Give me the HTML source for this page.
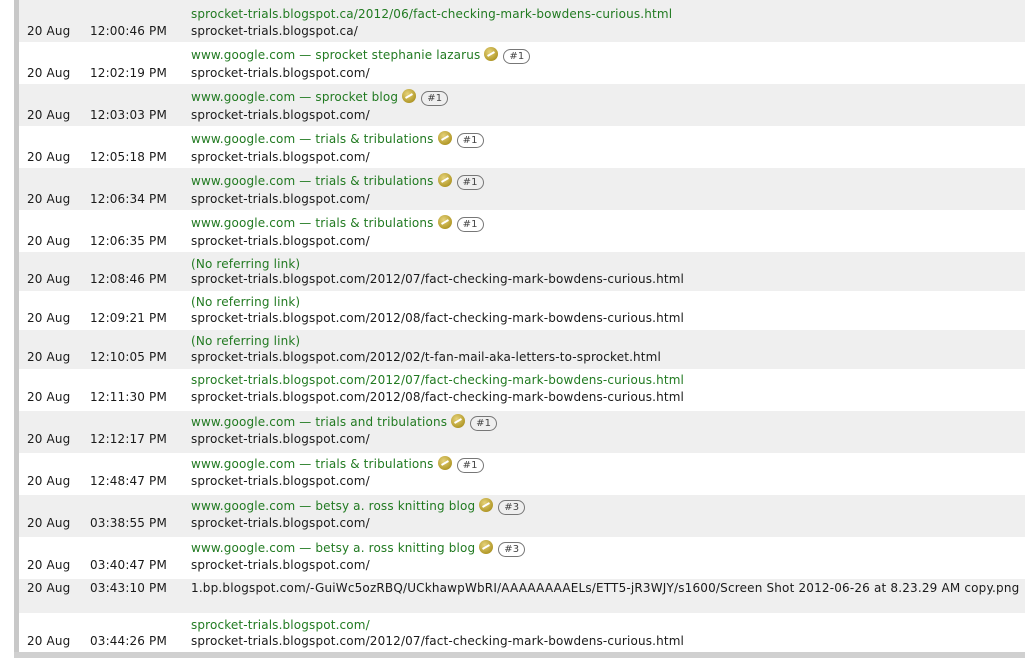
<!DOCTYPE html>
<html><head><meta charset="utf-8"><style>
body{margin:0;width:1025px;height:658px;overflow:hidden;background:#fff;font-family:"DejaVu Sans","Liberation Sans",sans-serif;font-size:12px;letter-spacing:0.15px;color:#1a1a1a;position:relative}
.strip{position:absolute;left:14px;top:0;width:5px;height:658px;background:#c8c8c8}
.bot{position:absolute;left:14px;top:652px;width:1011px;height:6px;background:#d0d0d0}
.row{position:absolute;left:19px;right:0}
.g{background:#efefef}.w{background:#fff}
.t{position:absolute;line-height:14px;white-space:nowrap}
.gr{color:#217a21}
.ic{display:inline-block;width:14px;height:14px;border-radius:50%;background:radial-gradient(circle at 40% 35%,#e6d27a,#b39a2a 70%,#8a7418);vertical-align:-2px;margin-left:4px;position:relative}
.ic:after{content:"";position:absolute;left:3px;top:6px;width:8px;height:2px;background:#fff;transform:rotate(-30deg)}
.pill{display:inline-block;border:1px solid #777;border-radius:8px;font-size:10px;color:#444;padding:0 5px;line-height:13px;margin-left:5px;vertical-align:0px}
</style></head><body>
<div class="strip"></div>
<div class="row g" style="top:0;height:42px"><span class="t" style="left:8px;top:24px">20 Aug</span><span class="t" style="left:71px;top:24px">12:00:46 PM</span><span class="t gr" style="left:172px;top:7px">sprocket-trials.blogspot.ca/2012/06/fact-checking-mark-bowdens-curious.html</span><span class="t" style="left:172px;top:24px">sprocket-trials.blogspot.ca/</span></div>
<div class="row w" style="top:42px;height:42px"><span class="t" style="left:8px;top:24px">20 Aug</span><span class="t" style="left:71px;top:24px">12:02:19 PM</span><span class="t gr" style="left:172px;top:5px">www.google.com — sprocket stephanie lazarus<span class="ic"></span><span class="pill">#1</span></span><span class="t" style="left:172px;top:24px">sprocket-trials.blogspot.com/</span></div>
<div class="row g" style="top:84px;height:42px"><span class="t" style="left:8px;top:24px">20 Aug</span><span class="t" style="left:71px;top:24px">12:03:03 PM</span><span class="t gr" style="left:172px;top:5px">www.google.com — sprocket blog<span class="ic"></span><span class="pill">#1</span></span><span class="t" style="left:172px;top:24px">sprocket-trials.blogspot.com/</span></div>
<div class="row w" style="top:126px;height:42px"><span class="t" style="left:8px;top:24px">20 Aug</span><span class="t" style="left:71px;top:24px">12:05:18 PM</span><span class="t gr" style="left:172px;top:5px">www.google.com — trials &amp; tribulations<span class="ic"></span><span class="pill">#1</span></span><span class="t" style="left:172px;top:24px">sprocket-trials.blogspot.com/</span></div>
<div class="row g" style="top:168px;height:42px"><span class="t" style="left:8px;top:24px">20 Aug</span><span class="t" style="left:71px;top:24px">12:06:34 PM</span><span class="t gr" style="left:172px;top:5px">www.google.com — trials &amp; tribulations<span class="ic"></span><span class="pill">#1</span></span><span class="t" style="left:172px;top:24px">sprocket-trials.blogspot.com/</span></div>
<div class="row w" style="top:210px;height:42px"><span class="t" style="left:8px;top:24px">20 Aug</span><span class="t" style="left:71px;top:24px">12:06:35 PM</span><span class="t gr" style="left:172px;top:5px">www.google.com — trials &amp; tribulations<span class="ic"></span><span class="pill">#1</span></span><span class="t" style="left:172px;top:24px">sprocket-trials.blogspot.com/</span></div>
<div class="row g" style="top:252px;height:39px"><span class="t" style="left:8px;top:20px">20 Aug</span><span class="t" style="left:71px;top:20px">12:08:46 PM</span><span class="t gr" style="left:172px;top:5px">(No referring link)</span><span class="t" style="left:172px;top:20px">sprocket-trials.blogspot.com/2012/07/fact-checking-mark-bowdens-curious.html</span></div>
<div class="row w" style="top:291px;height:39px"><span class="t" style="left:8px;top:20px">20 Aug</span><span class="t" style="left:71px;top:20px">12:09:21 PM</span><span class="t gr" style="left:172px;top:4px">(No referring link)</span><span class="t" style="left:172px;top:20px">sprocket-trials.blogspot.com/2012/08/fact-checking-mark-bowdens-curious.html</span></div>
<div class="row g" style="top:330px;height:39px"><span class="t" style="left:8px;top:20px">20 Aug</span><span class="t" style="left:71px;top:20px">12:10:05 PM</span><span class="t gr" style="left:172px;top:4px">(No referring link)</span><span class="t" style="left:172px;top:20px">sprocket-trials.blogspot.com/2012/02/t-fan-mail-aka-letters-to-sprocket.html</span></div>
<div class="row w" style="top:369px;height:42px"><span class="t" style="left:8px;top:21px">20 Aug</span><span class="t" style="left:71px;top:21px">12:11:30 PM</span><span class="t gr" style="left:172px;top:4px">sprocket-trials.blogspot.com/2012/07/fact-checking-mark-bowdens-curious.html</span><span class="t" style="left:172px;top:21px">sprocket-trials.blogspot.com/2012/08/fact-checking-mark-bowdens-curious.html</span></div>
<div class="row g" style="top:411px;height:42px"><span class="t" style="left:8px;top:21px">20 Aug</span><span class="t" style="left:71px;top:21px">12:12:17 PM</span><span class="t gr" style="left:172px;top:3px">www.google.com — trials and tribulations<span class="ic"></span><span class="pill">#1</span></span><span class="t" style="left:172px;top:21px">sprocket-trials.blogspot.com/</span></div>
<div class="row w" style="top:453px;height:42px"><span class="t" style="left:8px;top:21px">20 Aug</span><span class="t" style="left:71px;top:21px">12:48:47 PM</span><span class="t gr" style="left:172px;top:3px">www.google.com — trials &amp; tribulations<span class="ic"></span><span class="pill">#1</span></span><span class="t" style="left:172px;top:21px">sprocket-trials.blogspot.com/</span></div>
<div class="row g" style="top:495px;height:42px"><span class="t" style="left:8px;top:21px">20 Aug</span><span class="t" style="left:71px;top:21px">03:38:55 PM</span><span class="t gr" style="left:172px;top:3px">www.google.com — betsy a. ross knitting blog<span class="ic"></span><span class="pill">#3</span></span><span class="t" style="left:172px;top:21px">sprocket-trials.blogspot.com/</span></div>
<div class="row w" style="top:537px;height:42px"><span class="t" style="left:8px;top:21px">20 Aug</span><span class="t" style="left:71px;top:21px">03:40:47 PM</span><span class="t gr" style="left:172px;top:3px">www.google.com — betsy a. ross knitting blog<span class="ic"></span><span class="pill">#3</span></span><span class="t" style="left:172px;top:21px">sprocket-trials.blogspot.com/</span></div>
<div class="row g" style="top:579px;height:34px"><span class="t" style="left:8px;top:2px">20 Aug</span><span class="t" style="left:71px;top:2px">03:43:10 PM</span><span class="t" style="left:172px;top:2px;letter-spacing:0.18px">1.bp.blogspot.com/-GuiWc5ozRBQ/UCkhawpWbRI/AAAAAAAAELs/ETT5-jR3WJY/s1600/Screen Shot 2012-06-26 at 8.23.29 AM copy.png</span></div>
<div class="row w" style="top:613px;height:39px"><span class="t" style="left:8px;top:21px">20 Aug</span><span class="t" style="left:71px;top:21px">03:44:26 PM</span><span class="t gr" style="left:172px;top:5px">sprocket-trials.blogspot.com/</span><span class="t" style="left:172px;top:21px">sprocket-trials.blogspot.com/2012/07/fact-checking-mark-bowdens-curious.html</span></div>
<div class="bot"></div>
</body></html>
